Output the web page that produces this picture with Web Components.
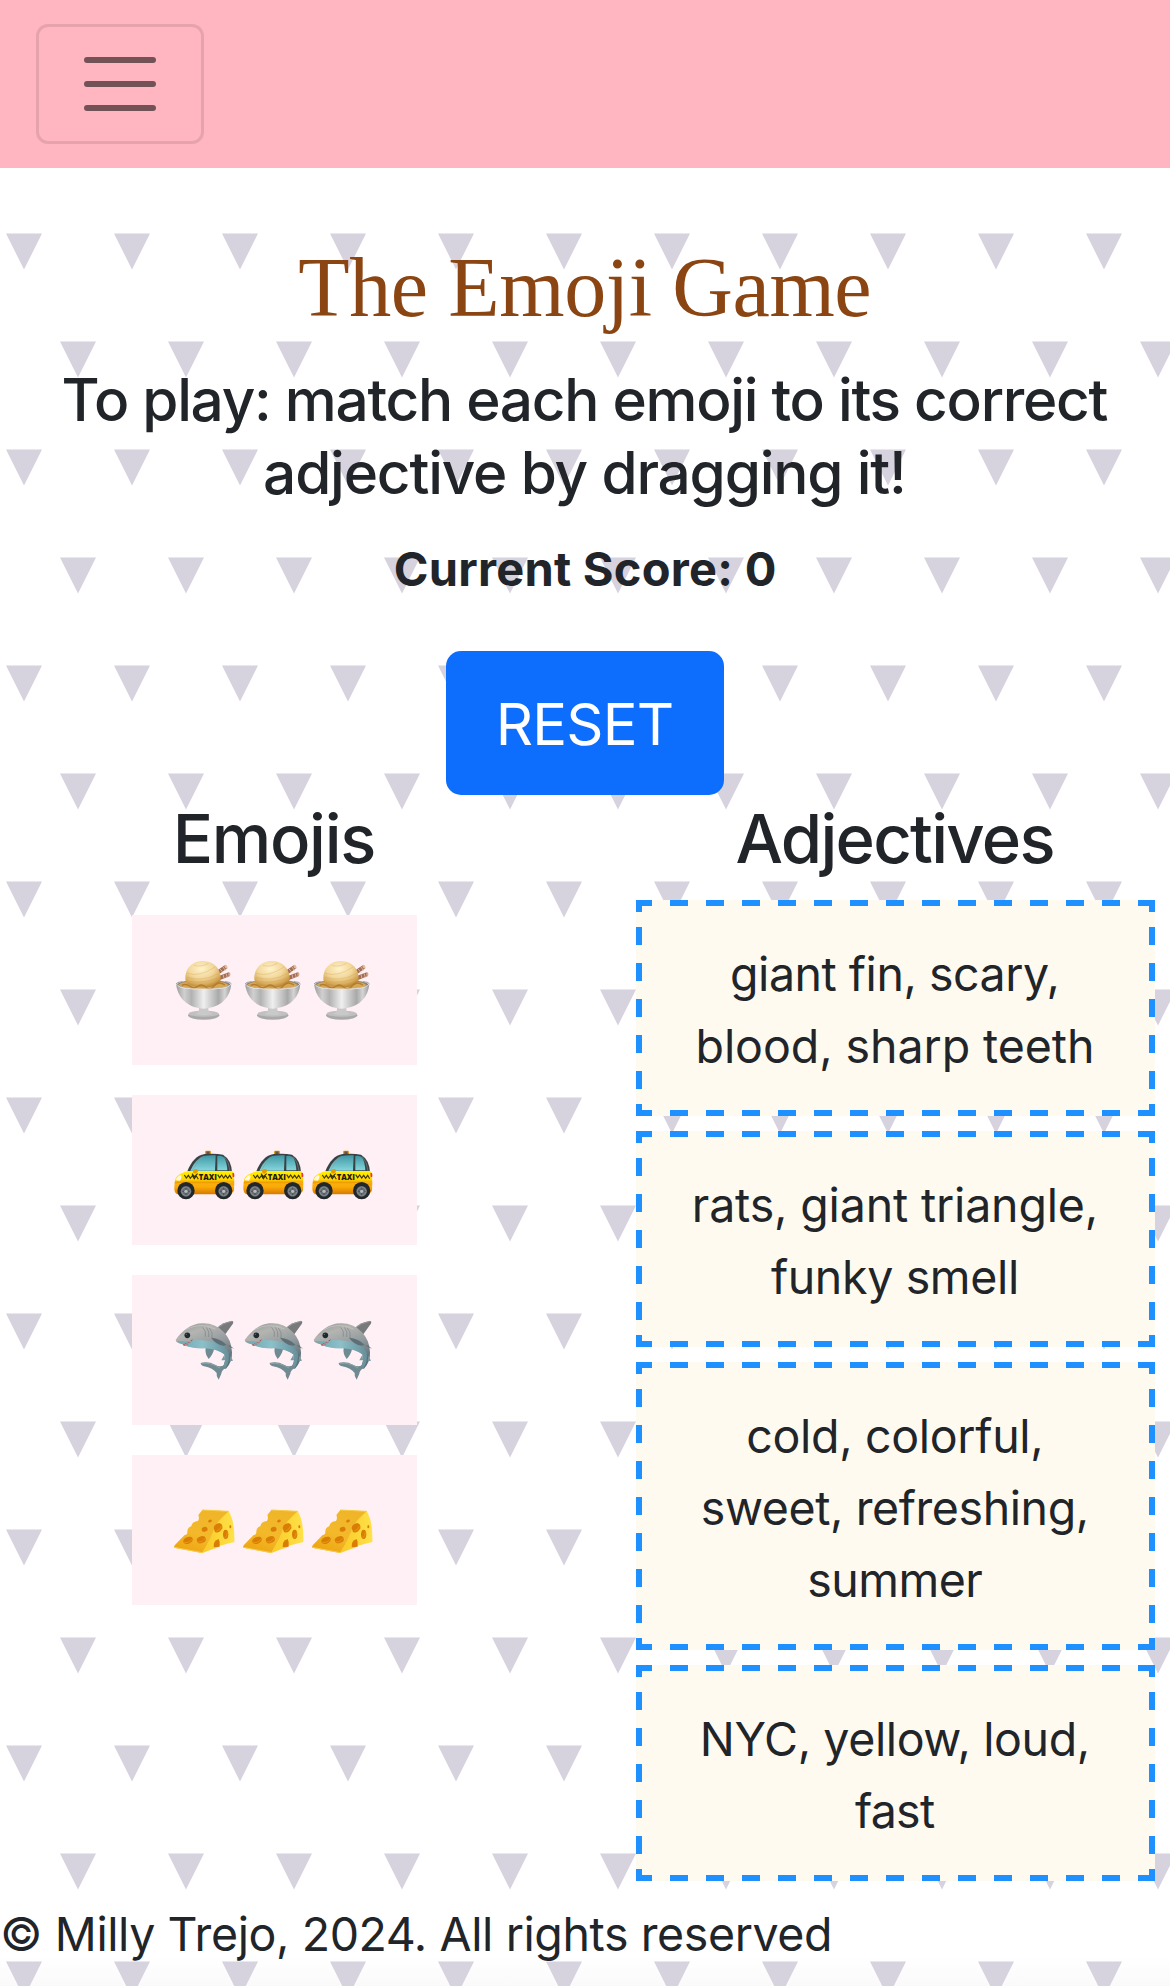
<!DOCTYPE html>
<html lang="en">
<head>
<meta charset="utf-8">
<title>The Emoji Game</title>
<style>
html,body{margin:0;padding:0}
body{background:#fff;color:#212529;font-family:Inter,"Liberation Sans",sans-serif}
</style>
</head>
<body>
<game-page></game-page>
<script>
const make = (el, html) => { const r = el.attachShadow({mode:'open'}); r.innerHTML = html; return r; };

/* One line of text whose tracking is adjusted to a given ink width. */
customElements.define('fit-line', class extends HTMLElement {
  connectedCallback() {
    if (this.shadowRoot) return;
    make(this, `<style>:host{display:block;white-space:nowrap}span{display:inline-block}</style><span><slot></slot></span>`);
    const cs = getComputedStyle(this);
    const ctx = document.createElement('canvas').getContext('2d');
    ctx.font = `${cs.fontWeight} ${cs.fontSize} ${cs.fontFamily}`;
    const t = this.textContent;
    const m = ctx.measureText(t);
    const ink = m.actualBoundingBoxLeft + m.actualBoundingBoxRight;
    const ls = (Number(this.getAttribute('width')) - ink) / (t.length - 1);
    this.style.letterSpacing = ls + 'px';
    this.shadowRoot.querySelector('span').style.marginRight = -ls + 'px';
  }
});

customElements.define('nav-bar', class extends HTMLElement {
  connectedCallback() {
    make(this, `<style>
      :host{display:flex;align-items:center;height:168px;padding:0 36px;background:#ffb6c1;box-sizing:border-box}
      button{width:168px;height:120px;box-sizing:border-box;border:3px solid rgba(0,0,0,.1);border-radius:12px;background:none;padding:0;display:flex;align-items:center;justify-content:center}
      svg{display:block}
    </style>
    <button aria-label="Toggle navigation"><svg width="90" height="90" viewBox="0 0 30 30"><path stroke="rgba(0,0,0,.55)" stroke-linecap="round" stroke-miterlimit="10" stroke-width="2" d="M4 7h22M4 15h22M4 23h22"/></svg></button>`);
  }
});

const art = {
  icecream: `<defs>
    <linearGradient id="bowl"><stop offset="0" stop-color="#9d9d9d"/><stop offset=".15" stop-color="#d0d0d0"/><stop offset=".28" stop-color="#b2b2b2"/><stop offset=".5" stop-color="#efefef"/><stop offset=".77" stop-color="#a9a9a9"/><stop offset=".88" stop-color="#d4d4d4"/><stop offset="1" stop-color="#999"/></linearGradient>
    <radialGradient id="scoop" cx=".45" cy=".3" r=".72"><stop offset="0" stop-color="#fff2ca"/><stop offset=".5" stop-color="#f2d79a"/><stop offset=".8" stop-color="#d9ad5c"/><stop offset="1" stop-color="#b98537"/></radialGradient></defs>
    <ellipse cx="251" cy="346" rx="47" ry="13" fill="#a9a9a9"/><ellipse cx="251" cy="341" rx="45" ry="9" fill="#c0c0c0"/>
    <path d="M236 318Q241 338 225 341Q250 350 278 341Q261 338 266 318Z" fill="#c9c9c9"/>
    <ellipse cx="251" cy="254" rx="81" ry="14" fill="#858278"/>
    <path d="M292 211L314 196L322 205L298 222Z" fill="#a06f57"/><path d="M298 227L326 217L330 228L300 240Z" fill="#a06f57"/>
    <path d="M300 207L309 217M309 201L316 211M309 223L312 235M318 220L322 232" stroke="#d9b395" stroke-width="3"/><ellipse cx="318" cy="200" rx="4" ry="6" fill="#e2bd99" transform="rotate(-35 318 200)"/><ellipse cx="328" cy="223" rx="3" ry="6" fill="#d2a88a"/>
    <path d="M175 254Q188 244 202 247L301 245Q318 248 326 255Q314 266 251 268Q190 266 175 254Z" fill="#d6a754"/>
    <path d="M196 238C194 206 216 183 249 183C283 183 304 209 302 239C301 255 278 262 249 262C216 262 198 254 196 238Z" fill="url(#scoop)"/>
    <path d="M202 220Q240 232 285 201M201 232Q247 247 296 220M209 245Q254 251 298 233M222 196Q242 203 265 190" fill="none" stroke="#c79648" stroke-opacity=".34" stroke-width="2.5"/>
    <path d="M185 256Q198 250 210 259T234 259T258 262T282 258T315 255" fill="none" stroke="#b77c2b" stroke-width="4"/>
    <path d="M168 251C177 267 210 268 251 268C292 268 327 266 334 251C331 290 306 318 265 324Q251 329 236 324C196 317 172 288 168 251Z" fill="url(#bowl)"/>
    <path d="M169 252C178 266 215 267 251 267C290 267 326 265 333 252" fill="none" stroke="#e8e8e8" stroke-width="2.5"/><path d="M168 252Q170 246 188 245M315 245Q331 246 334 251" fill="none" stroke="#9c9c9c" stroke-width="3"/>`,
  taxi: `<defs>
    <linearGradient id="glass" x2="0" y2="1"><stop offset="0" stop-color="#3f97a4"/><stop offset="1" stop-color="#86d7dc"/></linearGradient>
    <linearGradient id="body" x2="0" y2="1"><stop offset="0" stop-color="#fff100"/><stop offset=".37" stop-color="#ffd400"/><stop offset=".5" stop-color="#f09a00"/><stop offset=".65" stop-color="#ffae07"/><stop offset="1" stop-color="#d57800"/></linearGradient></defs>
    <rect x="255" y="212" width="18" height="12" rx="3" fill="#e39c1c"/><path d="M259 214h10v8h-10z" fill="#685444"/>
    <path d="M202 274C213 245 231 225 254 222Q286 219 309 224Q334 239 336 277Z" fill="#394144"/>
    <path d="M211 272Q225 238 250 228Q268 225 287 226L285 272Z" fill="url(#glass)"/><path d="M292 228Q306 226 313 233Q321 247 322 271H292Z" fill="url(#glass)"/>
    <path d="M245 230L217 270M313 229Q328 249 330 273" stroke="#8d9999" stroke-width="1.5" fill="none"/>
    <path d="M167 295Q177 278 207 273H337Q345 284 342 331Q338 342 325 343H173Q162 340 163 321Q163 306 167 295Z" fill="url(#body)"/>
    <path d="M165 313Q190 307 213 312H290Q319 304 342 309" fill="none" stroke="#ffc22c" stroke-width="2"/>
    <path d="M167 301Q170 289 183 285Q187 292 180 302Z" fill="#fff8dc"/><path d="M337 279Q344 276 343 290L338 292Z" fill="#e6333e"/>
    <path d="M219 272Q220 266 229 267Q236 268 233 276L227 281L220 280Z" fill="#e59a00"/>
    <path d="M193 285L199 294L205 286L211 295L217 287L223 296L229 288L235 298M216 281L223 290L233 281M293 284L299 293L305 285L311 294L317 286L323 295L329 286L335 296" fill="none" stroke="#3b3308" stroke-width="3.4"/>
    <text x="236" y="299" font-family="Open Sans,sans-serif" font-size="24" font-weight="800" fill="#211c0a" textLength="55" lengthAdjust="spacingAndGlyphs">TAXI</text>
    <g fill="#22272a"><circle cx="198" cy="332" r="26"/><circle cx="311" cy="332" r="26"/></g><g fill="#666d72"><circle cx="198" cy="334" r="16"/><circle cx="311" cy="334" r="16"/></g><g fill="none" stroke="#8f969b" stroke-width="2.5"><circle cx="198" cy="334" r="12.5"/><circle cx="311" cy="334" r="12.5"/></g><g stroke="#3e4448" stroke-width="2"><path d="M198 322v24M186 334h24M311 322v24M299 334h24"/></g><g fill="#b5babd"><circle cx="198" cy="334" r="5"/><circle cx="311" cy="334" r="5"/></g>`,
  shark: `<defs>
    <linearGradient id="skin" x2=".45" y2="1"><stop offset="0" stop-color="#8e9395"/><stop offset=".28" stop-color="#b4b5b1"/><stop offset=".6" stop-color="#959c9f"/><stop offset="1" stop-color="#5d6f76"/></linearGradient>
    <linearGradient id="belly"><stop offset="0" stop-color="#6ba4b0"/><stop offset=".5" stop-color="#8cc0c9"/><stop offset="1" stop-color="#66909b"/></linearGradient></defs>
    <path d="M288 207Q306 186 337 183Q342 185 338 192L316 223Z" fill="#77797b"/><path d="M290 206Q310 188 335 184" stroke="#96999a" stroke-width="3" fill="none"/>
    <path d="M257 262Q254 283 266 297Q278 286 283 265Z" fill="#6e8b92"/>
    <path d="M167 240C184 215 212 190 248 190Q286 189 311 216Q335 240 336 277Q337 307 318 326L306 324Q319 304 315 284Q294 266 257 264Q216 266 190 253Q168 250 167 240Z" fill="url(#skin)"/>
    <path d="M168 243Q209 246 226 240Q267 240 299 252Q320 262 326 278Q330 303 317 323L309 320Q320 300 313 283Q291 268 258 265Q217 267 190 254Z" fill="url(#belly)"/>
    <path d="M273 233Q288 254 311 257Q327 251 342 266Q322 259 313 249Q302 237 273 233Z" fill="#5d6f76"/>
    <path d="M314 283L304 301L315 301M331 287L339 302L329 304" fill="#7b979e"/>
    <path d="M242 309Q264 303 285 314Q299 323 312 316L317 324Q304 332 304 341L296 359Q288 349 290 339Q279 324 252 319Q242 316 242 309Z" fill="#708a91"/><path d="M245 310Q273 307 300 324" fill="none" stroke="#8da5a9" stroke-width="3"/>
    <path d="M190 253Q205 249 219 237Q213 251 191 258Z" fill="#9f5053"/><path d="M193 252l5 3 3-6 5 2 3-7 5 1" stroke="#e8dedd" stroke-width="1.3" fill="none"/>
    <circle cx="202" cy="226" r="8.5" fill="#20292d"/><circle cx="199" cy="223" r="2" fill="#65747b"/>
    <path d="M248 202Q260 214 256 230M259 202Q270 215 266 231M268 204Q280 217 276 234" fill="none" stroke="#7d8485" stroke-width="2"/><path d="M197 209Q241 185 286 207" fill="none" stroke="#c7c7c4" stroke-width="3" stroke-opacity=".7"/>`,
  cheese: `<defs>
    <linearGradient id="top" x1=".7" x2=".2" y2="1"><stop offset="0" stop-color="#efb428"/><stop offset=".55" stop-color="#f3b92b"/><stop offset="1" stop-color="#eda40e"/></linearGradient>
    <linearGradient id="side"><stop offset="0" stop-color="#f9ca24"/><stop offset="1" stop-color="#ffe14a"/></linearGradient></defs>
    <path d="M247 210L326 214Q345 244 343 306L299 317Q292 325 281 326L247 339L244 330Z" fill="url(#side)"/>
    <path d="M247 210L326 214Q298 238 285 259Q275 293 247 339L163 323Q161 319 165 315Q177 302 194 285Q202 285 202 277Q201 263 214 259Q216 244 234 243Q239 235 235 225Z" fill="url(#top)"/>
    <path d="M247 210L326 214M163 322L247 338" stroke="#f8cc4a" stroke-width="3"/>
    <path d="M325 215Q304 233 287 259Q277 293 247 339" fill="none" stroke="#fbcf38" stroke-width="3"/>
    <g fill="#d97d05"><ellipse cx="204" cy="301" rx="15" ry="10" transform="rotate(-22 204 301)"/><ellipse cx="244" cy="299" rx="14" ry="10" transform="rotate(-22 244 299)"/><ellipse cx="254" cy="268" rx="9" ry="7" transform="rotate(-18 254 268)"/><ellipse cx="270" cy="243" rx="6" ry="4" transform="rotate(-25 270 243)"/><path d="M281 264Q284 250 298 249Q309 252 307 265Q297 282 285 276Z"/><ellipse cx="317" cy="283" rx="8" ry="14"/><ellipse cx="331" cy="260" rx="3" ry="5"/><path d="M281 322Q279 302 296 297Q301 306 299 320Z"/></g>
    <g fill="none" stroke="#f0a31c" stroke-width="2"><path d="M192 306Q204 312 216 298M233 305Q245 309 256 294M289 274Q303 268 304 258M314 294Q322 289 322 276"/></g>`
};

customElements.define('emoji-tile', class extends HTMLElement {
  connectedCallback() {
    const one = `<svg width="61" height="60" viewBox="162 183 183 180" aria-hidden="true">${art[this.getAttribute('kind')]}</svg>`;
    make(this, `<style>:host{display:flex;gap:8px;width:285px;height:150px;box-sizing:border-box;padding:46px 0 0 42px;background:#fff0f5}svg{display:block;flex:none;overflow:visible}</style>${one.repeat(3)}`);
  }
});

customElements.define('drop-zone', class extends HTMLElement {
  connectedCallback() {
    make(this, `<style>
      :host{--b:#1e90ff;--h:repeating-linear-gradient(90deg,var(--b) -1.6px 16.4px,transparent 16.4px 34.36px);--v:repeating-linear-gradient(180deg,var(--b) -9px 9px,transparent 9px 27px);--c:linear-gradient(var(--b),var(--b));
        display:block;box-sizing:border-box;padding:38px 7px 34px 6px;text-align:center;font-size:46.5px;line-height:72px;
        background:var(--h) 0 0/100% 6px no-repeat,var(--h) 0 100%/100% 6px no-repeat,var(--v) 0 0/6px 100% no-repeat,var(--v) 100% 0/6px 100% no-repeat,var(--c) 0 0/6px 12px no-repeat,var(--c) 100% 0/6px 12px no-repeat,var(--c) 0 100%/6px 12px no-repeat,var(--c) 100% 100%/6px 12px no-repeat,#fffaf0}
    </style><slot></slot>`);
  }
});

customElements.define('reset-button', class extends HTMLElement {
  connectedCallback() {
    make(this, `<style>:host{display:block}button{display:block;width:278px;height:144px;margin:0;padding:2px 0 0;border:0;border-radius:15px;background:#0d6efd;color:#fff;font:400 58px/72px Inter,sans-serif}</style><button><fit-line width="171">RESET</fit-line></button>`);
  }
});

customElements.define('game-column', class extends HTMLElement {
  connectedCallback() {
    make(this, `<style>:host{display:flex;flex-direction:column;align-items:center}
      h3{margin:0;font-size:67px;line-height:84px;font-weight:500;height:84px}
      .list{display:flex;flex-direction:column;width:100%;align-items:var(--align,stretch);gap:var(--gap);margin-top:var(--top)}</style>
      <h3><fit-line width="${this.getAttribute('width')}">${this.getAttribute('heading')}</fit-line></h3><div class="list"><slot></slot></div>`);
  }
});

customElements.define('game-page', class extends HTMLElement {
  connectedCallback() {
    make(this, `<style>
      :host{display:flex;flex-direction:column;height:1986px;width:1170px;overflow:hidden;
        background:url("data:image/svg+xml,%3Csvg xmlns='http://www.w3.org/2000/svg' width='108' height='216'%3E%3Cpath fill='%23d6d2de' d='M6 17.5h36l-18 36zM60 125.5h36l-18 36z'/%3E%3C/svg%3E") 0 0/108px 216px,linear-gradient(#fff 1955px,#fafafa 1986px)}
      header{display:flex;flex-direction:column;align-items:center;text-align:center;padding-top:70px}
      h1{margin:0;font:400 84px/100px "Liberation Serif",serif;color:#8b4513}
      h5{margin:25px 0 0;font-size:58.5px;line-height:73px;font-weight:500}
      .score{margin:24px 0 0;font-size:47px;line-height:72px;font-weight:700}
      reset-button{margin-top:46px}
      main{display:flex;justify-content:space-between;padding:2px 15px 0 12px;height:1084px;box-sizing:content-box}
      .e{width:525px;--align:center;--gap:30px;--top:34px}
      .a{width:519px;--gap:15px;--top:19px}
      footer{margin-top:17px;font-size:46.5px;line-height:72px}
    </style>
    <nav-bar></nav-bar>
    <header>
      <h1><fit-line width="570">The Emoji Game</fit-line></h1>
      <h5><fit-line width="1044">To play: match each emoji to its correct</fit-line><fit-line width="638">adjective by dragging it!</fit-line></h5>
      <div class="score"><fit-line width="379">Current Score: 0</fit-line></div>
      <reset-button></reset-button>
    </header>
    <main>
      <game-column class="e" heading="Emojis" width="196.5">
        <emoji-tile kind="icecream" aria-label="ice cream"></emoji-tile><emoji-tile kind="taxi" aria-label="taxi"></emoji-tile><emoji-tile kind="shark" aria-label="shark"></emoji-tile><emoji-tile kind="cheese" aria-label="cheese"></emoji-tile>
      </game-column>
      <game-column class="a" heading="Adjectives" width="317">
        <drop-zone><fit-line width="324.5">giant fin, scary,</fit-line><fit-line width="392.5">blood, sharp teeth</fit-line></drop-zone>
        <drop-zone><fit-line width="400">rats, giant triangle,</fit-line><fit-line width="245">funky smell</fit-line></drop-zone>
        <drop-zone><fit-line width="292">cold, colorful,</fit-line><fit-line width="383">sweet, refreshing,</fit-line><fit-line width="173">summer</fit-line></drop-zone>
        <drop-zone><fit-line width="383">NYC, yellow, loud,</fit-line><fit-line width="80">fast</fit-line></drop-zone>
      </game-column>
    </main>
    <footer><fit-line width="826">© Milly Trejo, 2024. All rights reserved</fit-line></footer>`);
  }
});
</script>
</body>
</html>
